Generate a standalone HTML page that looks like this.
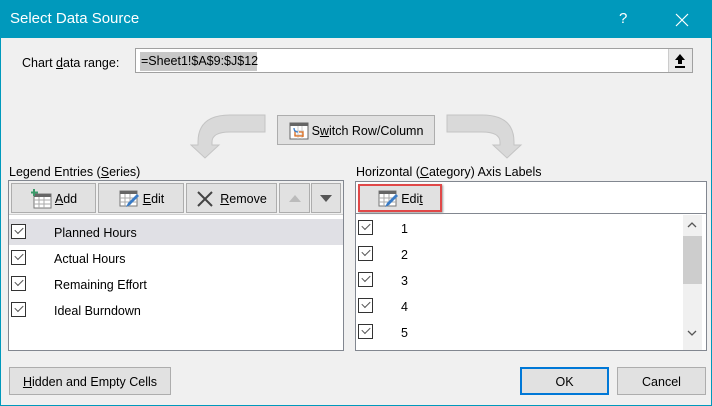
<!DOCTYPE html>
<html><head><style>
*{margin:0;padding:0;box-sizing:border-box}
body{width:712px;height:406px;background:#f0f0f0;font-family:"Segoe UI","Liberation Sans",sans-serif;font-size:12.5px;color:#000;position:relative;overflow:hidden}
.a{position:absolute}
.btn{position:absolute;background:#e1e1e1;border:1px solid #adadad;display:flex;align-items:center;justify-content:center;white-space:nowrap}
.cb{position:absolute;width:15px;height:15px;border:1px solid #333;background:#fff}
.cb:after{content:"";position:absolute;left:3px;top:2px;width:7px;height:4px;border-left:1.3px solid #555;border-bottom:1.3px solid #555;transform:rotate(-45deg)}
u{text-decoration:underline}
.t{position:absolute;margin-top:2px}
</style></head><body>
<div class="a" style="left:0;top:0;width:712px;height:38px;background:#0099bc"></div>
<div class="a" style="left:0;top:0;width:1px;height:406px;background:#0099bc"></div>
<div class="a" style="right:0;top:0;width:1px;height:406px;background:#0099bc"></div>
<div class="a" style="left:0;bottom:0;width:712px;height:1px;background:#0099bc"></div>
<div class="a" style="left:10px;top:10px;color:#fff;font-size:15px">Select Data Source</div>
<div class="a" style="left:619px;top:10px;color:#fff;font-size:15px">?</div>
<svg class="a" style="left:675px;top:13px" width="14" height="14"><path d="M1 1L13 13M13 1L1 13" stroke="#fff" stroke-width="1.2"/></svg>

<div class="t" style="left:22px;top:54px">Chart <u>d</u>ata range:</div>
<div class="a" style="left:135px;top:48px;width:558px;height:25px;background:#fff;border:1px solid #a0a0a0"></div>
<div class="a" style="left:140px;top:52px;width:117px;height:19px;background:#c8c8c8;padding-left:1px;line-height:19px">=Sheet1!$A$9:$J$12</div>
<div class="a" style="left:668px;top:49px;width:24px;height:23px;background:#e8e8e8;border-left:1px solid #ccc"></div>
<svg class="a" style="left:673px;top:53px" width="14" height="16"><path d="M7 1L2 7H5V11H9V7H12Z" fill="#000"/><rect x="2" y="13" width="10" height="2" fill="#000"/></svg>

<svg class="a" style="left:190px;top:112px" width="340" height="50">
<path d="M75 3H40Q8 3 8 30V33H1L15 46L29 33H22V30Q22 20 40 20H75Z" fill="#d9d9d9" stroke="#c4c4c4"/>
<path d="M257 3H292Q324 3 324 30V33H331L317 46L303 33H310V30Q310 20 292 20H257Z" fill="#d9d9d9" stroke="#c4c4c4"/>
</svg>
<div class="btn" style="left:277px;top:115px;width:158px;height:30px;padding-top:2px">
<svg width="20" height="18" style="margin-right:3px"><rect x="1" y="1" width="18" height="16" fill="#fff" stroke="#666"/><rect x="1" y="1" width="18" height="3" fill="#666"/><path d="M5 9H15M5 13H15M9 4V17M13 4V17" stroke="#ccc"/><path d="M10 10H14V15M6 9V14H14" stroke="#e07020" fill="none" stroke-width="1.3"/><path d="M5 6Q5 10 9 10" stroke="#3a7cc7" fill="none" stroke-width="1.3"/></svg>
S<u>w</u>itch Row/Column</div>

<div class="t" style="left:9px;top:163px">Legend Entries (<u>S</u>eries)</div>
<div class="a" style="left:8px;top:180px;width:336px;height:171px;background:#fff;border:1px solid #828790"></div>
<div class="a" style="left:9px;top:181px;width:334px;height:34px;background:#f0f0f0;border-bottom:1px solid #d0d0d0"></div>
<div class="btn" style="left:11px;top:183px;width:85px;height:30px;padding-top:2px">
<svg width="22" height="20" style="margin-right:3px"><rect x="4" y="5" width="17" height="14" fill="#fff" stroke="#777"/><rect x="4" y="5" width="17" height="3" fill="#666"/><path d="M4 11H21M4 15H21M9 8V19M14 8V19" stroke="#aaa"/><path d="M4 0V7M1 3.5H8" stroke="#3a9a6a" stroke-width="2"/></svg><u>A</u>dd</div>
<div class="btn" style="left:98px;top:183px;width:86px;height:30px;padding-top:2px">
<svg width="22" height="20" style="margin-right:3px"><rect x="2" y="2" width="17" height="15" fill="#fff" stroke="#777"/><rect x="2" y="2" width="17" height="3" fill="#666"/><path d="M2 9H19M2 13H19M7 5V17M12 5V17" stroke="#aaa"/><path d="M8 18L10 14L19 5L21 7L12 16Z" fill="#3a7cc7"/></svg><u>E</u>dit</div>
<div class="btn" style="left:186px;top:183px;width:91px;height:30px;padding-top:2px">
<svg width="18" height="18" style="margin-right:6px"><path d="M2 2L16 16M16 2L2 16" stroke="#444" stroke-width="2"/></svg><u>R</u>emove</div>
<div class="btn" style="left:279px;top:183px;width:31px;height:30px"><svg width="12" height="7"><path d="M0 7L6 0L12 7Z" fill="#bbb"/></svg></div>
<div class="btn" style="left:311px;top:183px;width:30px;height:30px"><svg width="12" height="7"><path d="M0 0L6 7L12 0Z" fill="#555"/></svg></div>
<div class="a" style="left:9px;top:219px;width:334px;height:26px;background:#e0e0e5"></div>
<div class="cb" style="left:11px;top:224px"></div><div class="t" style="left:54px;top:224px">Planned Hours</div>
<div class="cb" style="left:11px;top:250px"></div><div class="t" style="left:54px;top:250px">Actual Hours</div>
<div class="cb" style="left:11px;top:276px"></div><div class="t" style="left:54px;top:276px">Remaining Effort</div>
<div class="cb" style="left:11px;top:302px"></div><div class="t" style="left:54px;top:302px">Ideal Burndown</div>

<div class="t" style="left:356px;top:163px">Horizontal (<u>C</u>ategory) Axis Labels</div>
<div class="a" style="left:355px;top:181px;width:352px;height:170px;background:#fff;border:1px solid #828790"></div>
<div class="a" style="left:356px;top:182px;width:350px;height:32px;background:#fff;border-bottom:1px solid #828790"></div>
<div class="btn" style="left:358px;top:184px;width:84px;height:28px;border:2px solid #e04848;box-shadow:1px 1px 2px #999;padding-top:2px">
<svg width="22" height="20" style="margin-right:2px"><rect x="2" y="2" width="17" height="15" fill="#fff" stroke="#777"/><rect x="2" y="2" width="17" height="3" fill="#666"/><path d="M2 9H19M2 13H19M7 5V17M12 5V17" stroke="#aaa"/><path d="M8 18L10 14L19 5L21 7L12 16Z" fill="#3a7cc7"/></svg>Edi<u>t</u></div>
<div class="cb" style="left:358px;top:220px"></div><div class="t" style="left:401px;top:220px">1</div>
<div class="cb" style="left:358px;top:246px"></div><div class="t" style="left:401px;top:246px">2</div>
<div class="cb" style="left:358px;top:272px"></div><div class="t" style="left:401px;top:272px">3</div>
<div class="cb" style="left:358px;top:298px"></div><div class="t" style="left:401px;top:298px">4</div>
<div class="cb" style="left:358px;top:324px"></div><div class="t" style="left:401px;top:324px">5</div>
<div class="a" style="left:683px;top:215px;width:19px;height:135px;background:#f0f0f0"></div>
<div class="a" style="left:683px;top:236px;width:19px;height:48px;background:#cdcdcd"></div>
<svg class="a" style="left:687px;top:222px" width="10" height="6"><path d="M1 5L5 1L9 5" stroke="#555" fill="none" stroke-width="1.3"/></svg>
<svg class="a" style="left:687px;top:330px" width="10" height="6"><path d="M1 1L5 5L9 1" stroke="#555" fill="none" stroke-width="1.3"/></svg>

<div class="btn" style="left:9px;top:367px;width:162px;height:28px;padding-top:2px"><span><u>H</u>idden and Empty Cells</span></div>
<div class="btn" style="left:520px;top:367px;width:89px;height:28px;border:2px solid #0078d7;padding-top:2px">OK</div>
<div class="btn" style="left:617px;top:367px;width:89px;height:28px;padding-top:2px">Cancel</div>
</body></html>
